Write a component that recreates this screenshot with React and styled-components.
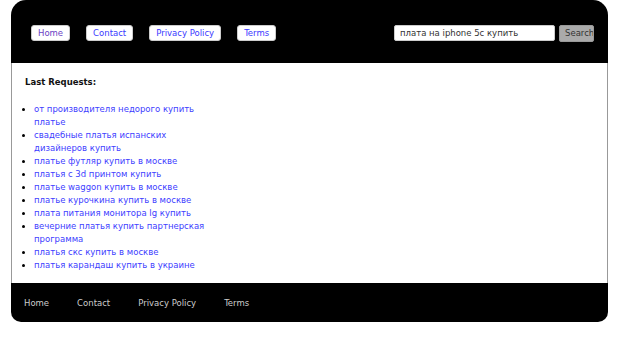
import React from "react";
import styled, { createGlobalStyle } from "styled-components";

const Global = createGlobalStyle`
  html, body { margin: 0; padding: 0; background: #fff; }
  body { font-family: "DejaVu Sans", Verdana, sans-serif; font-size: 8.5px; }
`;

const Page = styled.div`
  width: 597px;
  margin: 0 0 0 11px;
`;

const Header = styled.header`
  background: #000;
  height: 63px;
  border-radius: 15px 15px 0 0;
  display: flex;
  align-items: center;
  justify-content: space-between;
  padding: 0 14px 0 20px;
  box-sizing: border-box;
`;

const Nav = styled.nav`
  display: flex;
  gap: 16px;
  margin-top: 3px;
`;

const NavButton = styled.a`
  display: block;
  background: #fff;
  border: 1px solid #ccc;
  border-radius: 3px;
  padding: 0 6px;
  height: 14px;
  line-height: 14px;
  font-size: 8.5px;
  color: ${(p) => (p.$visited ? "#6a3fc4" : "#3a3aff")};
  text-decoration: none;
`;

const SearchForm = styled.form`
  display: flex;
  align-items: center;
  gap: 4px;
  margin-top: 3px;
`;

const SearchInput = styled.input`
  width: 161px;
  height: 16px;
  box-sizing: border-box;
  border: 1px solid #ccc;
  border-radius: 2px;
  padding: 0 5px;
  font-family: "DejaVu Sans", Verdana, sans-serif;
  font-size: 8.5px;
  color: #333;
  outline: none;
`;

const SearchButton = styled.button`
  width: 35px;
  height: 17px;
  box-sizing: border-box;
  background: #aaa;
  border: 1px solid #999;
  border-radius: 2px;
  padding: 0 0 0 5px;
  text-align: left;
  overflow: hidden;
  white-space: nowrap;
  font-family: "DejaVu Sans", Verdana, sans-serif;
  font-size: 8.5px;
  color: #333;
`;

const Content = styled.main`
  border-left: 1px solid #999;
  border-right: 1px solid #999;
  padding: 13px 13px 12px 13px;
  height: 220px;
  box-sizing: border-box;
`;

const Title = styled.h3`
  margin: 0 0 14px 0;
  font-size: 8.5px;
  font-weight: bold;
  line-height: 13px;
  color: #111;
`;

const List = styled.ul`
  margin: 0;
  padding: 0 0 0 9px;
  width: 178px;
  list-style: disc;
  line-height: 13px;
  font-size: 8.5px;
  li::marker { color: #000; font-size: 9px; }
`;

const Item = styled.li`
  a {
    color: #4040ff;
    text-decoration: none;
  }
`;

const Footer = styled.footer`
  background: #000;
  height: 39px;
  border-radius: 0 0 10px 10px;
  display: flex;
  align-items: center;
  gap: 28px;
  padding: 0 13px;
  box-sizing: border-box;
`;

const FooterLink = styled.a`
  color: #ccc;
  text-decoration: none;
  font-size: 8.5px;
`;

const requests = [
  "от производителя недорого купить платье",
  "свадебные платья испанских дизайнеров купить",
  "платье футляр купить в москве",
  "платья с 3d принтом купить",
  "платье waggon купить в москве",
  "платье курочкина купить в москве",
  "плата питания монитора lg купить",
  "вечерние платья купить партнерская программа",
  "платья скс купить в москве",
  "платья карандаш купить в украине",
];

const links = ["Home", "Contact", "Privacy Policy", "Terms"];

export default function App() {
  return (
    <>
      <Global />
      <Page>
        <Header>
          <Nav>
            {links.map((l, i) => (
              <NavButton key={l} href="#" $visited={i === 0}>
                {l}
              </NavButton>
            ))}
          </Nav>
          <SearchForm onSubmit={(e) => e.preventDefault()}>
            <SearchInput defaultValue="плата на iphone 5c купить" />
            <SearchButton type="submit">Search</SearchButton>
          </SearchForm>
        </Header>
        <Content>
          <Title>Last Requests:</Title>
          <List>
            {requests.map((r) => (
              <Item key={r}>
                <a href="#">{r}</a>
              </Item>
            ))}
          </List>
        </Content>
        <Footer>
          {links.map((l) => (
            <FooterLink key={l} href="#">
              {l}
            </FooterLink>
          ))}
        </Footer>
      </Page>
    </>
  );
}
